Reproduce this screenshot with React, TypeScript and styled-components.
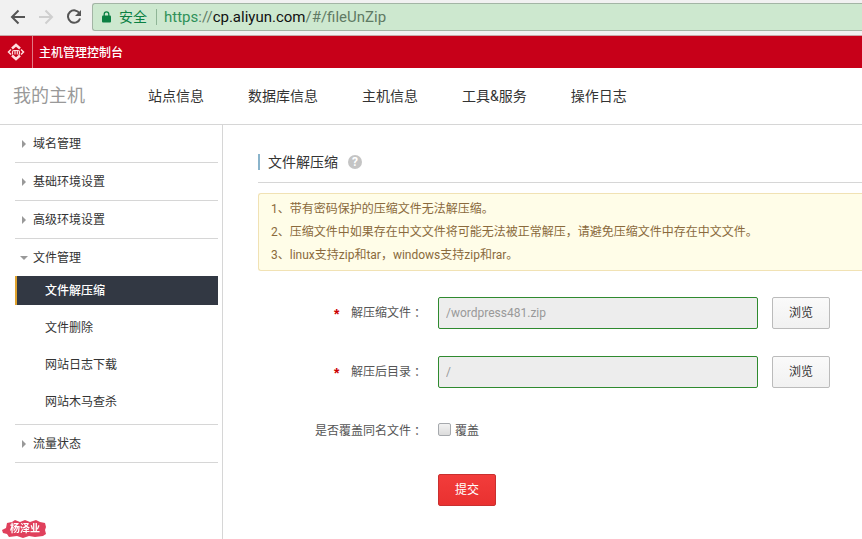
import React, { useState } from "react";
import styled, { createGlobalStyle } from "styled-components";

const GlobalStyle = createGlobalStyle`
  *, *::before, *::after { box-sizing: border-box; }
  html, body { margin: 0; padding: 0; }
  body {
    overflow: hidden;
    background: #fff;
    color: #333;
    font-family: Roboto, "Noto Sans CJK SC", sans-serif;
    font-size: 12px;
    line-height: 16px;
  }
  button, input { font: inherit; }
  a { color: inherit; text-decoration: none; }
  ul { list-style: none; margin: 0; padding: 0; }
`;

const Page = styled.div`
  display: flex;
  flex-direction: column;
  min-height: 100vh;
`;

/* browser bar */
const BrowserBar = styled.div`
  display: flex;
  align-items: center;
  height: 36px;
  padding: 0 0 2px 9px;
  background: #f1f1f1;
  border-bottom: 1px solid #c9a9a9;
`;

const BarButton = styled.button<{ $dim?: boolean }>`
  display: flex;
  justify-content: center;
  width: 18px;
  margin-right: 10px;
  padding: 0;
  border: 0;
  background: none;
  color: ${(p) => (p.$dim ? "#cfcfcf" : "#555")};
`;

const AddressBar = styled.div`
  flex: 1;
  display: flex;
  align-items: center;
  height: 28px;
  margin-left: -1px;
  padding-left: 9px;
  border: 1px solid #a3b5a5;
  border-right: 0;
  border-radius: 3px 0 0 3px;
  background: #cde8cf;
  color: #0b8043;
  font-size: 14px;
  white-space: nowrap;
`;

const Secure = styled.span`
  margin-left: 8px;
  padding-right: 9px;
  border-right: 1px solid #8fb596;
`;

const Url = styled.div`
  margin-left: 7px;
  color: #5f7a64;
  font-size: 15px;
  outline: none;
`;

const Scheme = styled.span`
  color: #2f9159;
`;

const Host = styled.span`
  color: #111;
`;

/* console header */
const Header = styled.header`
  display: flex;
  align-items: center;
  height: 32px;
  background: #c70019;
  color: #fff;
`;

const LogoLink = styled.a`
  display: flex;
  align-items: center;
  justify-content: center;
  width: 33px;
  height: 100%;
  border-right: 1px solid #e27a86;
`;

const HeaderTitle = styled.span`
  margin-left: 6px;
  padding-top: 2px;
  font-weight: 500;
`;

const Nav = styled.nav`
  display: flex;
  align-items: center;
  height: 57px;
  padding-left: 13px;
  border-bottom: 1px solid #d6d6d6;
  font-size: 14px;
  white-space: nowrap;
`;

const NavTitle = styled.h1`
  width: 135px;
  margin: 0;
  color: #999;
  font-size: 18px;
  font-weight: 400;
`;

const NavLinks = styled.div`
  display: flex;
  gap: 44px;
`;

/* body */
const Body = styled.div`
  flex: 1;
  display: flex;
`;

const Sidebar = styled.aside`
  flex: none;
  width: 223px;
  padding: 0 4px 0 15px;
  border-right: 1px solid #d6d6d6;
`;

const Group = styled.li`
  border-bottom: 1px solid #d6d6d6;
`;

const GroupButton = styled.button`
  display: flex;
  align-items: center;
  gap: 4px;
  width: 100%;
  height: 37px;
  padding: 0 0 0 4px;
  border: 0;
  background: none;
  color: #333;
`;

const SubItem = styled.li`
  padding-bottom: 8px;
`;

const SubLink = styled.a<{ $active?: boolean }>`
  display: flex;
  align-items: center;
  height: 29px;
  padding-left: 28px;
  border-left: 2px solid ${(p) => (p.$active ? "#e0a32e" : "transparent")};
  background: ${(p) => (p.$active ? "#323843" : "transparent")};
  color: ${(p) => (p.$active ? "#fff" : "#333")};
  font-weight: ${(p) => (p.$active ? 500 : 400)};
`;

const Main = styled.main`
  flex: 1;
  min-width: 0;
  padding: 16px 0 0 35px;
`;

const TitleRow = styled.div`
  display: flex;
  align-items: center;
  height: 42px;
  border-bottom: 1px solid #d6d6d6;
`;

const Title = styled.h2`
  margin: 0 10px 0 0;
  padding-left: 8px;
  border-left: 2px solid #8ab4cb;
  font-size: 14px;
  font-weight: 400;
`;

const HelpButton = styled.button`
  width: 14px;
  height: 14px;
  padding: 0;
  border: 0;
  border-radius: 50%;
  background: #c4c4c4;
  color: #fff;
  font-size: 12px;
  font-weight: 700;
  line-height: 14px;
`;

const Notice = styled.div`
  margin-top: 10px;
  padding: 4px 12px 3px;
  border: 1px solid #f1e2b4;
  border-right: 0;
  border-radius: 3px 0 0 3px;
  background: #fffde8;
  color: #8a6a3c;
  line-height: 23px;
`;

const NoticeLine = styled.p`
  margin: 0;
`;

const Form = styled.form`
  display: flex;
  flex-direction: column;
  gap: 27px;
  padding-top: 26px;
`;

const Row = styled.div`
  display: flex;
  align-items: center;
  height: 32px;
`;

const Label = styled.label`
  display: flex;
  align-items: center;
  justify-content: flex-end;
  flex: none;
  width: 165px;
  margin-right: 15px;
  color: #555;
`;

const Centered = styled.span`
  font-family: "Noto Sans CJK TC", sans-serif;
`;

const Required = styled.span`
  margin-right: 10px;
  padding-top: 6px;
  color: #c00;
  font-family: "Liberation Mono", monospace;
  font-size: 14px;
  font-weight: 700;
`;

const PathInput = styled.input`
  flex: 0 1 320px;
  min-width: 0;
  height: 32px;
  padding: 0 7px;
  border: 1px solid #2f8a2f;
  border-radius: 2px;
  background: #ededed;
  color: #999;
`;

const BrowseButton = styled.button`
  flex: none;
  width: 58px;
  height: 32px;
  margin-left: 14px;
  padding: 0;
  border: 1px solid #bbb;
  border-radius: 2px;
  background: linear-gradient(#fafafa, #f1f1f1);
  color: #333;
`;

const Check = styled.input`
  appearance: none;
  width: 13px;
  height: 13px;
  margin: 0 4px 4px 0;
  border: 1px solid #a6a9ad;
  border-radius: 2px;
  background: linear-gradient(#f2f2f2, #dcdcdc);
  &:checked { background: #5b86c4; }
`;

const CheckLabel = styled.label`
  color: #555;
`;

const SubmitButton = styled.button`
  width: 58px;
  height: 32px;
  margin-left: 180px;
  padding: 0;
  border: 1px solid #c9302f;
  border-radius: 2px;
  background: linear-gradient(#f23c3b, #e93130);
  color: #fff;
`;

const Seal = styled.svg`
  position: fixed;
  left: 2px;
  bottom: 1px;
`;

const BackIcon = () => (
  <svg width="16" height="16" viewBox="0 0 16 16" fill="none" stroke="currentColor" strokeWidth="2">
    <path d="M15 8H2.5M8.5 1.5 2 8l6.500 6.500" />
  </svg>
);

const ForwardIcon = () => (
  <svg width="16" height="16" viewBox="0 0 16 16" fill="none" stroke="currentColor" strokeWidth="2">
    <path d="M1 8h12.500M7.500 1.500 14 8l-6.500 6.500" />
  </svg>
);

const ReloadIcon = () => (
  <svg width="16" height="16" viewBox="0 0 16 16" fill="none" stroke="currentColor" strokeWidth="2">
    <path d="M13.600 4.500A6.200 6.200 0 1 0 14.100 9.500" />
    <path d="M15 1v6H9z" fill="currentColor" stroke="none" />
  </svg>
);

const LockIcon = () => (
  <svg width="9" height="12" viewBox="0 0 9 12">
    <path d="M2.200 5V3.200a2.300 2.300 0 0 1 4.600 0V5" fill="none" stroke="#0b8043" strokeWidth="1.300" />
    <rect y="4.500" width="9" height="7" rx="1" fill="#0b8043" />
  </svg>
);

const LogoIcon = () => (
  <svg width="18" height="18" viewBox="0 0 18 18" fill="none" stroke="#ffdede">
    <path d="M5 5.500 9 2l4 3.500M5 12.500 9 16l4-3.500" strokeWidth="2.500" />
    <path d="M4 6.500 1.500 9 4 11.500M14 6.500 16.500 9 14 11.500" strokeWidth="1.500" />
    <path d="M5.500 11.500V9q0-1.500 1.500-1.500h4q1.500 0 1.500 1.500v1.500q0 1-1 1M8 8v3.500M10.300 8v3.500" strokeWidth="1.200" />
  </svg>
);

const Caret = ({ open }: { open?: boolean }) => (
  <svg width="10" height="8" viewBox="0 0 10 8" fill="#999">
    <path d={open ? "M1 2h8L5 6z" : "M3 0v8l4-4z"} />
  </svg>
);

const navItems = ["站点信息", "数据库信息", "主机信息", "工具&服务", "操作日志"];

const groups = [
  { name: "域名管理", items: [] },
  { name: "基础环境设置", items: [] },
  { name: "高级环境设置", items: [] },
  { name: "文件管理", items: ["文件解压缩", "文件删除", "网站日志下载", "网站木马查杀"] },
  { name: "流量状态", items: [] },
];

const notices = [
  "1、带有密码保护的压缩文件无法解压缩。",
  "2、压缩文件中如果存在中文文件将可能无法被正常解压，请避免压缩文件中存在中文文件。",
  "3、linux支持zip和tar，windows支持zip和rar。",
];

const fields = [
  { id: "archive", label: "解压缩文件", value: "/wordpress481.zip" },
  { id: "target", label: "解压后目录", value: "/" },
];

export default function App() {
  const [overwrite, setOverwrite] = useState(false);
  return (
    <>
      <GlobalStyle />
      <Page>
        <BrowserBar>
          <BarButton aria-label="后退"><BackIcon /></BarButton>
          <BarButton aria-label="前进" $dim><ForwardIcon /></BarButton>
          <BarButton aria-label="重新加载"><ReloadIcon /></BarButton>
          <AddressBar>
            <LockIcon />
            <Secure>安全</Secure>
            <Url role="textbox" aria-label="地址" tabIndex={0}>
              <Scheme>https</Scheme>://<Host>cp.aliyun.com</Host>/#/fileUnZip
            </Url>
          </AddressBar>
        </BrowserBar>
        <Header>
          <LogoLink href="#" aria-label="首页"><LogoIcon /></LogoLink>
          <HeaderTitle>主机管理控制台</HeaderTitle>
        </Header>
        <Nav>
          <NavTitle>我的主机</NavTitle>
          <NavLinks>
            {navItems.map((item) => <a key={item} href="#">{item}</a>)}
          </NavLinks>
        </Nav>
        <Body>
          <Sidebar>
            <ul>
              {groups.map((group) => {
                const open = group.items.length > 0;
                return (
                  <Group key={group.name}>
                    <GroupButton aria-expanded={open}>
                      <Caret open={open} />
                      {group.name}
                    </GroupButton>
                    {open && (
                      <ul>
                        {group.items.map((item, i) => (
                          <SubItem key={item}>
                            <SubLink href="#" $active={i === 0}>{item}</SubLink>
                          </SubItem>
                        ))}
                      </ul>
                    )}
                  </Group>
                );
              })}
            </ul>
          </Sidebar>
          <Main>
            <TitleRow>
              <Title>文件解压缩</Title>
              <HelpButton aria-label="帮助">?</HelpButton>
            </TitleRow>
            <Notice>
              {notices.map((line) => <NoticeLine key={line}>{line}</NoticeLine>)}
            </Notice>
            <Form onSubmit={(e) => e.preventDefault()}>
              {fields.map((field) => (
                <Row key={field.id}>
                  <Label htmlFor={field.id}>
                    <Required>*</Required>
                    {field.label}<Centered>：</Centered>
                  </Label>
                  <PathInput id={field.id} type="text" readOnly value={field.value} />
                  <BrowseButton type="button">浏览</BrowseButton>
                </Row>
              ))}
              <Row>
                <Label as="span">是否覆盖同名文件<Centered>：</Centered></Label>
                <Check
                  id="overwrite"
                  type="checkbox"
                  checked={overwrite}
                  onChange={(e) => setOverwrite(e.target.checked)}
                />
                <CheckLabel htmlFor="overwrite">覆盖</CheckLabel>
              </Row>
              <Row>
                <SubmitButton type="submit">提交</SubmitButton>
              </Row>
            </Form>
          </Main>
        </Body>
      </Page>
      <Seal width="45" height="19" viewBox="0 0 45 19" role="img" aria-label="杨泽业">
        <path d="M0 11 4 9 5 4 10 3 13 1l5 2 5-2 5 2 6-2 4 2 5 1 1 4-1 3 1 4-3 2-8 1-6-1-6 2-6-2-8 1-2-3-4-1z" fill="#e0405c" />
        <text x="23" y="13" textAnchor="middle" fill="#fff" fontSize="10" fontWeight="700" fontFamily="Noto Sans CJK SC, sans-serif">杨泽业</text>
      </Seal>
    </>
  );
}
